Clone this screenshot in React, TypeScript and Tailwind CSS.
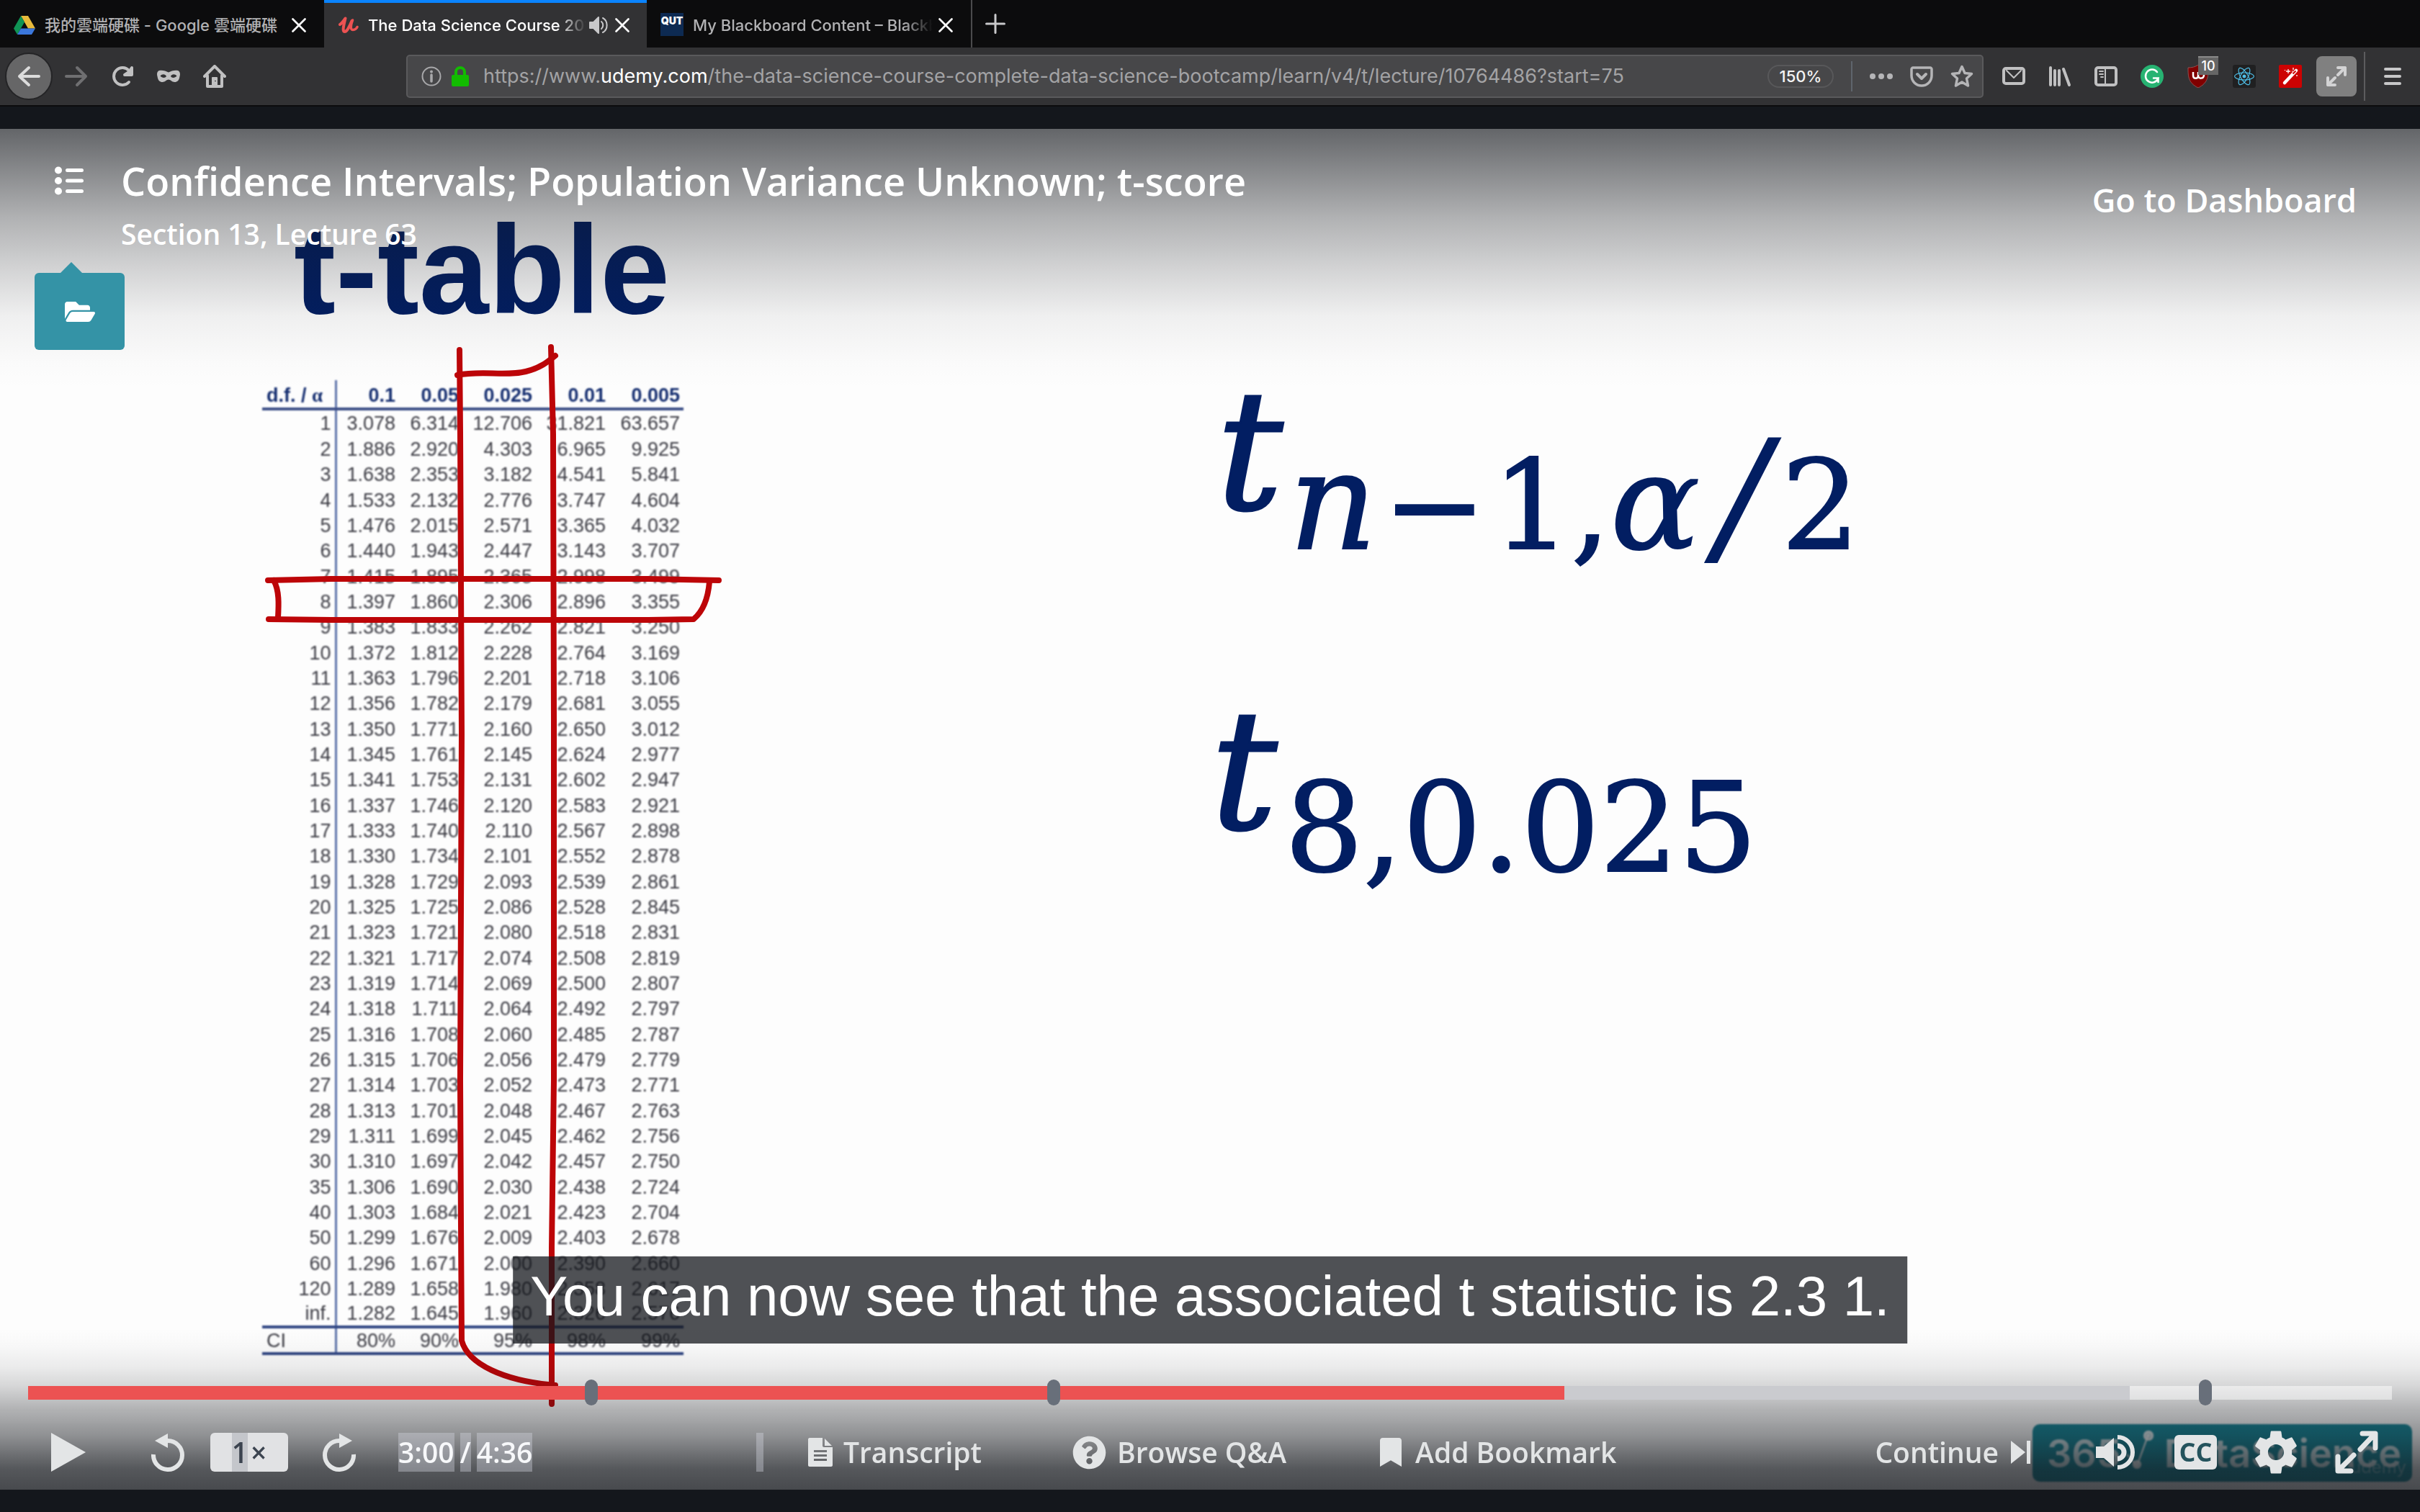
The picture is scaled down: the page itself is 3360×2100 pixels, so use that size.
import React from "react";
import { FaFolderOpen, FaReact, FaQuestionCircle, FaBookmark } from "react-icons/fa";
import { MdSettings } from "react-icons/md";

const HEAD = ["0.1", "0.05", "0.025", "0.01", "0.005"];

const ROWS = `1 3.078 6.314 12.706 31.821 63.657
2 1.886 2.920 4.303 6.965 9.925
3 1.638 2.353 3.182 4.541 5.841
4 1.533 2.132 2.776 3.747 4.604
5 1.476 2.015 2.571 3.365 4.032
6 1.440 1.943 2.447 3.143 3.707
7 1.415 1.895 2.365 2.998 3.499
8 1.397 1.860 2.306 2.896 3.355
9 1.383 1.833 2.262 2.821 3.250
10 1.372 1.812 2.228 2.764 3.169
11 1.363 1.796 2.201 2.718 3.106
12 1.356 1.782 2.179 2.681 3.055
13 1.350 1.771 2.160 2.650 3.012
14 1.345 1.761 2.145 2.624 2.977
15 1.341 1.753 2.131 2.602 2.947
16 1.337 1.746 2.120 2.583 2.921
17 1.333 1.740 2.110 2.567 2.898
18 1.330 1.734 2.101 2.552 2.878
19 1.328 1.729 2.093 2.539 2.861
20 1.325 1.725 2.086 2.528 2.845
21 1.323 1.721 2.080 2.518 2.831
22 1.321 1.717 2.074 2.508 2.819
23 1.319 1.714 2.069 2.500 2.807
24 1.318 1.711 2.064 2.492 2.797
25 1.316 1.708 2.060 2.485 2.787
26 1.315 1.706 2.056 2.479 2.779
27 1.314 1.703 2.052 2.473 2.771
28 1.313 1.701 2.048 2.467 2.763
29 1.311 1.699 2.045 2.462 2.756
30 1.310 1.697 2.042 2.457 2.750
35 1.306 1.690 2.030 2.438 2.724
40 1.303 1.684 2.021 2.423 2.704
50 1.299 1.676 2.009 2.403 2.678
60 1.296 1.671 2.000 2.390 2.660
120 1.289 1.658 1.980 2.358 2.617
inf. 1.282 1.645 1.960 2.326 2.576`
  .split("\n")
  .map((line) => line.split(" "));

const CONFIDENCE = ["80%", "90%", "95%", "98%", "99%"];

const URL_HEAD = "https://www.";
const URL_HOST = "udemy.com";
const URL_TAIL = "/the-data-science-course-complete-data-science-bootcamp/learn/v4/t/lecture/10764486?start=75";

function CloseIcon() {
  return (
    <svg viewBox="0 0 20 20" className="size-5 shrink-0" fill="none" stroke="#fff" strokeWidth="2.6" strokeLinecap="round">
      <path d="M1.5 1.5l17 17M18.5 1.5l-17 17" />
    </svg>
  );
}

function DriveIcon() {
  return (
    <svg viewBox="0 0 30 26" className="h-[26px] w-[30px] shrink-0">
      <path d="M10 0h10l10 17.5H20z" fill="#e9bb3c" />
      <path d="M10 0l5 8.7L5 26 0 17.5z" fill="#109455" />
      <path d="M10 17.500h20L25 26H5z" fill="#3b77dc" />
    </svg>
  );
}

function UdemyIcon() {
  return (
    <svg viewBox="0 0 28 24" className="h-6 w-7 shrink-0" fill="none" stroke="#ec5252" strokeLinecap="round" strokeLinejoin="round">
      <path d="M2 11C4 10 7 6 9.500 2.500C8 9 4.500 21 8.500 21C12 21 15.500 13 18.500 6" strokeWidth="4" />
      <path d="M19.500 5C17 12 16 18.500 20 18.500C23 18.500 25.500 16 26 14.500" strokeWidth="3.500" />
    </svg>
  );
}

function TabSpeaker() {
  return (
    <svg viewBox="0 0 28 28" className="size-7 shrink-0" fill="none" stroke="#c8c8ca" strokeWidth="2" strokeLinecap="round">
      <path d="M1 10h5l7-7v22l-7-7H1z" fill="#c8c8ca" strokeLinejoin="round" />
      <path d="M17 9c3 2.500 3 7.500 0 10M19 4c7.500 4 7.500 16 0 20" />
    </svg>
  );
}

type TabProps = { icon: React.ReactNode; title: string; active?: boolean; audio?: boolean; fade?: boolean };

function Tab({ icon, title, active, audio, fade }: TabProps) {
  return (
    <div
      className={
        active
          ? "flex h-full w-[448px] items-center border-t-4 border-[#0a84ff] bg-[#323234] pr-[24px] pl-[20px] text-white"
          : "flex h-full w-[450px] items-center border-t-4 border-transparent pr-[25px] pl-[19px] text-[#b1b1b3]"
      }
    >
      {icon}
      <a
        href="#tab"
        className={
          fade
            ? "ml-[13px] min-w-0 flex-1 overflow-hidden whitespace-nowrap [mask-image:linear-gradient(to_left,transparent,black_40px)]"
            : "ml-[13px] min-w-0 flex-1 overflow-hidden whitespace-nowrap"
        }
      >
        {title}
      </a>
      {audio && (
        <button aria-label="Mute tab" className="ml-1">
          <TabSpeaker />
        </button>
      )}
      <button aria-label="Close tab" className="ml-2">
        <CloseIcon />
      </button>
    </div>
  );
}

function TabStrip() {
  return (
    <div className="flex h-[66px] bg-[#0c0c0d] font-['Inter','Noto_Sans_CJK_TC',sans-serif] text-[22px] font-medium">
      <Tab icon={<DriveIcon />} title="我的雲端硬碟 - Google 雲端硬碟" />
      <Tab icon={<UdemyIcon />} title="The Data Science Course 2018: Complete Bootcamp" active audio fade />
      <Tab
        icon={
          <span className="mt-[14px] flex h-8 w-8 shrink-0 justify-center self-start bg-[#0d2a52] pt-1 text-[14px] leading-[14px] font-black text-white">
            QUT
          </span>
        }
        title="My Blackboard Content – Blackboard Learn"
        fade
      />
      <button aria-label="New tab" className="flex w-[66px] items-center justify-center border-l-2 border-[#4a4a4c]">
        <svg viewBox="0 0 28 28" className="size-7" stroke="#c8c8ca" strokeWidth="3" strokeLinecap="round">
          <path d="M14 1.500v25M1.500 14h25" />
        </svg>
      </button>
    </div>
  );
}

function Toolbar() {
  return (
    <div className="flex h-[82px] items-center border-b-2 border-[#0c0c0d] bg-[#323234] pr-[26px] pl-[7px] font-['Inter',sans-serif]">
      <button aria-label="Back" className="flex size-[66px] items-center justify-center rounded-full border-2 border-[#242426] bg-[#666667]">
        <svg viewBox="0 0 32 32" className="size-8" fill="none" stroke="#dcdcdc" strokeWidth="4" strokeLinecap="round" strokeLinejoin="round">
          <path d="M30 16H3M16 4L3 16l13 12" />
        </svg>
      </button>
      <div className="ml-[17px] flex w-[474px] items-center gap-8">
        <button aria-label="Forward">
          <svg viewBox="0 0 32 32" className="size-8" fill="none" stroke="#6f6f71" strokeWidth="4" strokeLinecap="round" strokeLinejoin="round">
            <path d="M2 16h27M17 4l12 12-12 12" />
          </svg>
        </button>
        <button aria-label="Reload">
          <svg viewBox="0 0 32 32" className="size-8" fill="none" stroke="#c0c0c1" strokeWidth="4" strokeLinecap="round" strokeLinejoin="round">
            <path d="M25 24A12 12 0 1 1 25 8" />
            <path d="M29 4v10H19l6-4z" fill="#c0c0c1" />
          </svg>
        </button>
        <button aria-label="Private container">
          <svg viewBox="0 0 32 32" className="size-8">
            <path
              d="M3 8c5-1 9 .5 13 2.500C20 8.500 24 7 29 8c3 1 3.500 5 2.500 8-.8 6-3.500 8-7 8-3.500 0-6-3.500-8.500-3.500S11 24 7.500 24c-3.500 0-6.200-2-7-8C-.5 13 0 9 3 8zM4.500 15.500c2.500 3.200 7 3.200 8.500.5-1.500-3.500-6-3.500-8.500-.5zm23 0c-2.500-3-7-3-8.500.5 1.500 2.700 6 2.700 8.500-.5z"
              fill="#c0c0c1"
              fillRule="evenodd"
            />
          </svg>
        </button>
        <button aria-label="Home">
          <svg viewBox="0 0 32 32" className="size-8" fill="none" stroke="#c0c0c1" strokeWidth="4" strokeLinecap="round" strokeLinejoin="round">
            <path d="M2 16L16 2l14 14M6 15v15h20V15" />
            <path d="M13 30V18h6v12" fill="#c0c0c1" strokeWidth="2" />
            <path d="M17 22v1" stroke="#323234" strokeWidth="2" strokeLinecap="butt" />
          </svg>
        </button>
      </div>
      <div className="flex h-[60px] min-w-0 flex-1 items-center rounded-[5px] border-2 border-[#5a5a5c] bg-[#474749] pr-3 pl-[19px]">
        <button aria-label="Site information">
          <svg viewBox="0 0 28 28" className="size-7" fill="none" stroke="#a9a9ab" strokeWidth="2">
            <circle cx="14" cy="14" r="12.500" />
            <path d="M14 12v9" strokeWidth="3.500" strokeLinecap="round" />
            <circle cx="14" cy="7.500" r="1" fill="#a9a9ab" />
          </svg>
        </button>
        <button aria-label="Secure connection" className="ml-[14px]">
          <svg viewBox="0 0 24 28" className="h-7 w-6">
            <rect y="12" width="24" height="16" rx="2" fill="#12bc00" />
            <path d="M6 13V8a6 6 0 0 1 12 0v5" fill="none" stroke="#12bc00" strokeWidth="4" />
          </svg>
        </button>
        <div className="relative ml-5 min-w-0 flex-1 text-[27px] leading-[40px] whitespace-nowrap text-[#a3a3a5]">
          <span aria-hidden="true">
            {URL_HEAD}
            <span className="text-white">{URL_HOST}</span>
            {URL_TAIL}
          </span>
          <input
            aria-label="Address"
            defaultValue="https://www.udemy.com"
            className="absolute inset-0 w-full bg-transparent text-transparent outline-none"
          />
        </div>
        <button className="h-8 w-[92px] rounded-full border-2 border-[#58585a] text-[22px] leading-7 font-medium text-[#f4f4f4]">150%</button>
        <span className="ml-6 h-[42px] w-[2px] bg-[#5f656d]" />
        <div className="ml-6 flex items-center gap-6">
          <button aria-label="Page actions">
            <svg viewBox="0 0 32 32" className="size-8" fill="#b5b5b7">
              <circle cx="4" cy="16" r="4" />
              <circle cx="16" cy="16" r="4" />
              <circle cx="28" cy="16" r="4" />
            </svg>
          </button>
          <button aria-label="Save to Pocket">
            <svg viewBox="0 0 32 32" className="size-8" fill="none" stroke="#b5b5b7" strokeWidth="4" strokeLinecap="round" strokeLinejoin="round">
              <path d="M4 4h24c1 0 2 1 2 2v9a14 14 0 0 1-28 0V6c0-1 1-2 2-2z" strokeWidth="3.500" />
              <path d="M10 13l6 6 6-6" />
            </svg>
          </button>
          <button aria-label="Bookmark this page">
            <svg viewBox="0 0 32 32" className="size-8" fill="none" stroke="#b5b5b7" strokeWidth="3.500" strokeLinejoin="round">
              <path d="M16 2.500l4 9 9.500 1-7 6.500 2 10-8.500-5-8.500 5 2-10-7-6.500 9.500-1z" />
            </svg>
          </button>
        </div>
      </div>
      <div className="ml-[26px] flex items-center gap-8">
        <button aria-label="Mail">
          <svg viewBox="0 0 32 32" className="size-8" fill="none" stroke="#c0c0c1" strokeWidth="4" strokeLinejoin="round" strokeLinecap="round">
            <rect x="2" y="5" width="28" height="21" rx="3" />
            <path d="M6 8l10 10L26 8" strokeWidth="2" />
          </svg>
        </button>
        <button aria-label="Library">
          <svg viewBox="0 0 32 32" className="size-8" fill="none" stroke="#c0c0c1" strokeWidth="4" strokeLinecap="round">
            <path d="M3 4v24M9 8v20M15 8v20M21 6l8 22" />
          </svg>
        </button>
        <button aria-label="Sidebars">
          <svg viewBox="0 0 32 32" className="size-8" fill="none" stroke="#c0c0c1" strokeLinecap="round">
            <rect x="2" y="4" width="28" height="24" rx="3" strokeWidth="4" />
            <path d="M15 4v24M7 9h5M7 13h5M9 17h3" strokeWidth="2" />
          </svg>
        </button>
        <button aria-label="Grammarly">
          <svg viewBox="0 0 32 32" className="size-8" fill="none">
            <circle cx="16" cy="16" r="16" fill="#27b372" />
            <path d="M23 10a9 9 0 1 0 1.500 8.500H18M24.500 18.500V24" stroke="#fff" strokeWidth="2.500" strokeLinecap="round" />
          </svg>
        </button>
        <button aria-label="Content blocker, 10 blocked" className="relative">
          <svg viewBox="0 0 32 32" className="size-8" fill="none">
            <path d="M16 0C12 3 7 4 2 4c0 12 0 21 14 28C30 25 30 16 30 4 25 4 20 3 16 0z" fill="#800000" stroke="#8e5353" />
            <path d="M9 10v5c0 5 7 5 7 0v-5M16 15c0 5 8 5 8-1s-7-4-6 0" stroke="#fff" strokeWidth="2.500" />
          </svg>
          <span className="absolute -top-3 left-4 h-[26px] w-7 border-t-2 border-[#8a8a8a] bg-[#666] text-center text-[18px] leading-6 font-medium text-white">
            10
          </span>
        </button>
        <button aria-label="React tools" className="flex size-8 items-center justify-center rounded-[3px] bg-[#202021] text-[#4fbfe8]">
          <FaReact className="size-7" />
        </button>
        <button aria-label="Magic wand" className="flex size-8 items-center justify-center rounded-[2px] bg-[#cc0202]">
          <svg viewBox="0 0 32 32" className="size-8">
            <path d="M8 25L24 8" stroke="#fff" strokeWidth="4.500" strokeLinecap="round" />
            <path d="M19.500 12.500l4-4" stroke="#cc0202" strokeWidth="2" />
            <path d="M13 6v6M10 9h6M20 4v3M8.500 7v1M25 14v2M18 9h1" stroke="#fff" strokeWidth="1.300" />
          </svg>
        </button>
      </div>
      <button aria-label="Exit full screen" className="ml-5 flex size-14 items-center justify-center rounded-lg bg-[#808080]">
        <svg viewBox="0 0 28 28" className="size-7" fill="none" stroke="#d3d3d4" strokeWidth="4" strokeLinecap="round" strokeLinejoin="round">
          <path d="M16 2h10v10M26 2L16 12M12 26H2V16M2 26l10-10" />
        </svg>
      </button>
      <span className="ml-[10px] h-[68px] w-[2px] bg-[#5c5c5e]" />
      <button aria-label="Menu" className="ml-[26px]">
        <svg viewBox="0 0 24 24" className="size-6" stroke="#c8c8c9" strokeWidth="4" strokeLinecap="round">
          <path d="M2 2h20M2 12h20M2 22h20" />
        </svg>
      </button>
    </div>
  );
}

function PenMarks() {
  return (
    <svg viewBox="364 528 585 1354" className="absolute inset-0 h-full w-full overflow-visible" fill="none" stroke="#bd0508" strokeWidth="8" strokeLinecap="round" strokeLinejoin="round">
      <path d="M638 486L639 600L641 1020L639 1500L640 1700L641 1862C650 1895 700 1918 771 1924" />
      <path d="M765 482L768 603L769 1000V1500L766 1733V1950" />
      <path d="M635 521C670 514 700 523 730 516C750 511 760 503 771 494" />
      <path d="M372 806L460 804L640 804H900L998 806" />
      <path d="M373 860L460 861H640L900 861L963 860C975 850 983 832 985 808" />
      <path d="M380 806C388 820 387 840 386 858" />
    </svg>
  );
}

function TTable() {
  return (
    <div className="relative w-[585px]">
      <table className="w-full table-fixed border-collapse font-['Liberation_Sans',sans-serif] text-[27px] leading-[30px] text-[#3c3c44] blur-[1px]">
        <colgroup>
          <col className="w-[102px]" />
          <col className="w-[83px]" />
          <col className="w-[88px]" />
          <col className="w-[102px]" />
          <col className="w-[102px]" />
          <col className="w-[108px]" />
        </colgroup>
        <thead>
          <tr className="h-[40px] border-b-4 border-[#3a4d86] text-[#152e70]">
            <th className="border-r-[3px] border-[#5f75ab] pt-1 pl-[6px] text-left">
              d.f. / <span className="font-['Liberation_Serif',serif]">α</span>
            </th>
            {HEAD.map((h, i) => (
              <th key={h} className={i === 4 ? "pt-1 pr-[5px] text-right" : "pt-1 text-right"}>
                {h}
              </th>
            ))}
          </tr>
        </thead>
        <tbody>
          {ROWS.map((row) => (
            <tr key={row[0]} className="h-[35px] first:h-[38px] nth-[3n]:h-[36px]">
              {row.map((cell, i) => (
                <td
                  key={i}
                  className={
                    i === 0
                      ? "border-r-[3px] border-[#5f75ab] pr-[5px] text-right"
                      : i === 5
                        ? "pr-[5px] text-right"
                        : "text-right"
                  }
                >
                  {cell}
                </td>
              ))}
            </tr>
          ))}
        </tbody>
        <tfoot>
          <tr className="h-[37px] border-y-4 border-[#2f4583]">
            <td className="border-r-[3px] border-[#5f75ab] pl-[6px] text-left">CI</td>
            {CONFIDENCE.map((c, i) => (
              <td key={c} className={i === 4 ? "pr-[5px] text-right" : "text-right"}>
                {c}
              </td>
            ))}
          </tr>
        </tfoot>
      </table>
      <PenMarks />
    </div>
  );
}

function Slide() {
  return (
    <div className="relative flex flex-1 bg-[#fdfdfd] pt-[108px] pb-[180px] pl-[364px]">
      <div>
        <h2 className="mb-[65px] ml-[44px] font-['Liberation_Sans',sans-serif] text-[174px] leading-[176px] font-bold text-[#021e62]">t-table</h2>
        <TTable />
      </div>
      <div className="ml-[732px] flex flex-col pt-[226px] font-['DejaVu_Serif',serif] leading-none text-[#021e62]">
        <div className="ml-[8px] flex items-start">
          <span className="text-[230px] italic [-webkit-text-stroke:3px]">t</span>
          <span className="mt-[72px] ml-[8px] flex items-baseline text-[172px] [-webkit-text-stroke:2px]">
            <i className="text-[190px]">n</i>
            <span className="ml-[8px]">−</span>
            <span className="ml-[8px]">1,</span>
            <i className="text-[184px]">α</i>
            <i className="mr-[18px] ml-[24px] text-[210px]">/</i>
            <span>2</span>
          </span>
        </div>
        <div className="mt-[162px] flex items-start">
          <span className="text-[230px] italic [-webkit-text-stroke:3px]">t</span>
          <span className="mt-[108px] ml-[10px] text-[172px] [-webkit-text-stroke:2px]">8,0.025</span>
        </div>
      </div>
      <div className="absolute right-[11px] bottom-[11px] flex h-[80px] w-[527px] items-center rounded-[10px] bg-[#138799] pl-[20px] font-['Inter',sans-serif] text-[54px] font-semibold text-white/80 blur-[1px]">
        365
        <svg viewBox="0 0 56 64" className="mx-[2px] mb-2 h-16 w-14" fill="none" stroke="currentColor" strokeWidth="2.500">
          <path d="M6 38l14 16L36 10" />
          <circle cx="20" cy="52" r="5" fill="currentColor" />
          <circle cx="36" cy="12" r="6" fill="currentColor" />
        </svg>
        DataScience
        <span className="absolute right-[8px] bottom-[8px] text-[24px] leading-6 font-normal text-white/40">udemy</span>
      </div>
    </div>
  );
}

function PlayerHeader() {
  return (
    <header className="absolute inset-x-0 top-0 flex h-[361px] items-start bg-[linear-gradient(to_bottom,rgb(20_23_28/0.66)_0%,rgb(20_23_28/0.52)_14%,rgb(20_23_28/0.33)_34%,rgb(20_23_28/0.18)_54%,rgb(20_23_28/0.06)_72%,rgb(20_23_28/0.01)_90%,rgb(20_23_28/0)_100%)] pr-[88px] pl-[76px] font-['Open_Sans',sans-serif] font-semibold text-white">
      <button aria-label="Course contents" className="mt-[52px]">
        <svg viewBox="0 0 40 40" className="size-10" stroke="#fff" strokeWidth="5" strokeLinecap="round">
          <path d="M17.500 5.500h20M17.500 20h20M17.500 34.500h20" />
          <path d="M5 5.500h0M5 20h0M5 34.500h0" strokeWidth="10" />
        </svg>
      </button>
      <div className="mt-[35px] ml-[52px] flex-1">
        <h1 className="text-[54px] leading-[74px]">Confidence Intervals; Population Variance Unknown; t-score</h1>
        <p className="text-[39px] leading-[74px]">Section 13, Lecture 63</p>
      </div>
      <a href="#dashboard" className="mt-[67px] text-[45px] leading-[64px]">
        Go to Dashboard
      </a>
      <button aria-label="Resources" className="absolute top-[200px] left-[48px] flex h-[107px] w-[125px] items-center justify-center rounded-[6px] bg-[#3493a6]">
        <svg viewBox="0 0 30 15" className="absolute -top-[15px] left-9 h-[15px] w-[30px]" fill="#3493a6">
          <path d="M15 0l15 15H0z" />
        </svg>
        <FaFolderOpen className="size-[42px]" />
      </button>
    </header>
  );
}

function Marker({ at }: { at: number }) {
  return <span className="absolute -top-[9px] h-9 w-[18px] rounded-[9px] bg-[#686f7a]" style={{ left: `${at}%` }} />;
}

function PlayerControls() {
  return (
    <footer className="absolute inset-x-0 bottom-0 flex flex-col bg-[linear-gradient(to_top,rgb(20_23_28/0.78)_0%,rgb(20_23_28/0.72)_13%,rgb(20_23_28/0.48)_33%,rgb(20_23_28/0.32)_50%,rgb(20_23_28/0.17)_64%,rgb(20_23_28/0.08)_76%,rgb(20_23_28/0.02)_90%,transparent_100%)] px-[39px] pt-[80px] font-['Open_Sans',sans-serif] text-[39px] font-semibold text-[#e3e5e6]">
      <div className="relative h-[19px] bg-white/50">
        <div className="absolute inset-y-0 left-0 bg-[#cacbcf]" style={{ width: "88.9%" }} />
        <div className="absolute inset-y-0 left-0 bg-[#ec5252]" style={{ width: "65%" }} />
        <Marker at={23.55} />
        <Marker at={43.1} />
        <Marker at={91.83} />
        <input type="range" aria-label="Seek" defaultValue="65" className="absolute inset-0 h-full w-full opacity-0" />
      </div>
      <div className="mt-[32px] flex h-[93px] items-start pt-[11px]">
        <div className="flex h-[60px] w-[1021px] items-center pl-8">
          <button aria-label="Play">
            <svg viewBox="0 0 48 54" className="h-[54px] w-12" fill="currentColor">
              <path d="M0 0l48 27L0 54z" />
            </svg>
          </button>
          <button aria-label="Rewind 15 seconds" className="ml-[91px]">
            <svg viewBox="0 0 46 54" className="h-[54px] w-[46px]" fill="none" stroke="currentColor" strokeWidth="6">
              <path d="M3 30a20 20 0 1 0 20-19" />
              <path d="M23 1v20L5 11z" fill="currentColor" stroke="none" />
            </svg>
          </button>
          <button aria-label="Playback rate" className="ml-[36px] flex h-[54px] w-[108px] items-center justify-center gap-1 rounded-[6px] bg-[#e1e2e4] text-[#3c4450]">
            <span className="bg-[#c4c6cb] leading-[54px]">1</span>
            <span className="leading-[54px]">×</span>
          </button>
          <button aria-label="Forward 15 seconds" className="ml-[48px]">
            <svg viewBox="0 0 46 54" className="h-[54px] w-[46px]" fill="none" stroke="currentColor" strokeWidth="6">
              <path d="M43 30a20 20 0 1 1-20-19" />
              <path d="M23 1v20l18-10z" fill="currentColor" stroke="none" />
            </svg>
          </button>
          <div className="ml-[59px] flex gap-2 leading-[54px] text-[#f7f8fa]">
            <span className="bg-[#cfd1dd]/40">3:00</span>
            <span className="bg-[#cfd1dd]/40">/</span>
            <span className="bg-[#cfd1dd]/40">4:36</span>
          </div>
          <span className="ml-auto h-[54px] w-[10px] bg-[#cfd1dd]/40" />
        </div>
        <div className="flex h-[60px] items-center pl-[62px]">
          <button className="flex items-center gap-[15px]">
            <svg viewBox="0 0 34 40" className="h-10 w-[34px]" fill="currentColor">
              <path
                d="M2 0h18v11c0 1 1 2 2 2h12v25c0 1-1 2-2 2H2c-1 0-2-1-2-2V2C0 1 1 0 2 0zm21 1l10 10H23zM8 17v3h18v-3zm0 6v3h18v-3zm0 6v3h18v-3z"
                fillRule="evenodd"
              />
            </svg>
            Transcript
          </button>
          <button className="ml-[126px] flex items-center gap-[15px]">
            <FaQuestionCircle className="size-[47px]" />
            Browse Q&amp;A
          </button>
          <button className="ml-[130px] flex items-center gap-[19px]">
            <FaBookmark className="h-10 w-[30px]" />
            Add Bookmark
          </button>
        </div>
        <div className="ml-auto flex h-[60px] items-center pr-[19px]">
          <button className="flex items-center gap-[17px]">
            Continue
            <svg viewBox="0 0 27 32" className="h-8 w-[27px]" fill="currentColor">
              <path d="M0 0l20 16L0 32zM22 0h5v32h-5z" />
            </svg>
          </button>
          <button aria-label="Volume" className="ml-[91px]">
            <svg viewBox="0 0 55 48" className="h-12 w-[55px]" fill="none" stroke="currentColor">
              <path d="M0 16h11L25 4v40L11 32H0z" fill="currentColor" stroke="none" />
              <path d="M30 3a21 21 0 0 1 0 42" strokeWidth="6" />
              <path d="M30 15a9 9 0 0 1 0 18" strokeWidth="7" />
            </svg>
          </button>
          <button aria-label="Captions" className="ml-[54px] h-12 w-[59px] rounded-[6px] bg-current text-center">
            <span className="block text-[36px] leading-[46px] font-bold text-[#24535d]">CC</span>
          </button>
          <button aria-label="Settings" className="ml-[45px]">
            <MdSettings className="size-[74px]" />
          </button>
          <button aria-label="Full screen" className="ml-[45px]">
            <svg viewBox="0 0 60 60" className="size-[60px]" fill="none" stroke="currentColor" strokeWidth="7" strokeLinecap="round" strokeLinejoin="round">
              <path d="M38 4h18v20M54 6L35 26M22 56H4V36M6 54l20-20" />
            </svg>
          </button>
        </div>
      </div>
    </footer>
  );
}

export default function App() {
  return (
    <div className="flex min-h-screen flex-col bg-[#14171c]">
      <TabStrip />
      <Toolbar />
      <main className="relative mt-[31px] mb-[31px] flex flex-1 flex-col">
        <Slide />
        <PlayerHeader />
        <PlayerControls />
        <p className="absolute bottom-[203px] left-1/2 h-[121px] w-max -translate-x-1/2 bg-[#14171c]/75 px-[24px] font-['Liberation_Sans',sans-serif] text-[78px] leading-[110px] whitespace-nowrap text-white">
          You can now see that the associated t statistic is 2.3 1.
        </p>
      </main>
    </div>
  );
}
